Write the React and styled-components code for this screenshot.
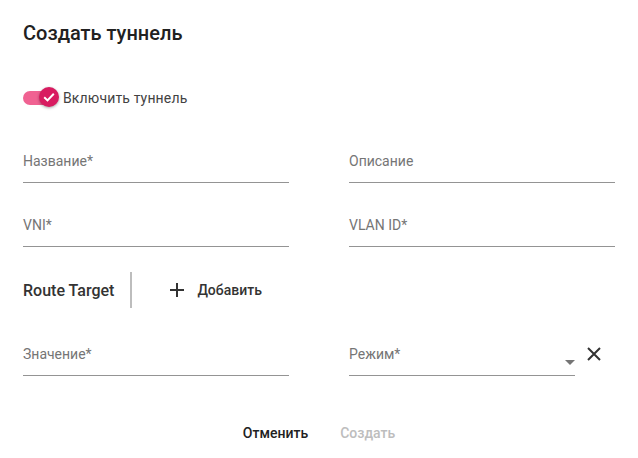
import styled, { createGlobalStyle } from "styled-components";

const GlobalStyle = createGlobalStyle`
  html, body {
    margin: 0;
    padding: 0;
    background: #fff;
    font-family: Roboto, "Noto Sans", sans-serif;
  }
`;

const Dialog = styled.div`
  width: 638px;
  height: 458px;
  box-sizing: border-box;
  padding: 17px 24px 0 23px;
  display: flex;
  flex-direction: column;
`;

const Title = styled.h2`
  margin: 0;
  font-size: 20px;
  line-height: 32px;
  font-weight: 500;
  color: #212121;
`;

const SwitchRow = styled.label`
  display: flex;
  align-items: center;
  height: 24px;
  margin-top: 37px;
  gap: 4px;
  font-size: 14px;
  letter-spacing: 0.15px;
  color: #424242;
`;

const SwitchBox = styled.span`
  position: relative;
  width: 36px;
  height: 24px;
  display: flex;
  align-items: center;
`;

const Track = styled.span`
  width: 34px;
  height: 14px;
  border-radius: 7px;
  background: #f06292;
`;

const Thumb = styled.span`
  position: absolute;
  left: 16px;
  top: 1px;
  width: 20px;
  height: 20px;
  border-radius: 50%;
  background: #d81b60;
  box-shadow: 0 1px 3px rgba(0, 0, 0, 0.35);
  display: flex;
  align-items: center;
  justify-content: center;
`;

const Grid = styled.div`
  display: grid;
  grid-template-columns: 266px 266px;
  column-gap: 60px;
  row-gap: 16px;
  margin-top: ${(p) => p.$top}px;
`;

const Field = styled.div`
  height: 48px;
  box-sizing: border-box;
  border-bottom: 1px solid #949494;
  padding-top: 16px;
  display: flex;
  justify-content: space-between;
  font-size: 14px;
  line-height: 20px;
  color: #757575;
  width: ${(p) => (p.$w ? `${p.$w}px` : "auto")};
`;

const Arrow = styled.span`
  align-self: flex-end;
  margin: 0 0 10px 0;
  width: 0;
  height: 0;
  border-left: 5px solid transparent;
  border-right: 5px solid transparent;
  border-top: 5px solid #757575;
`;

const SelectCell = styled.div`
  display: flex;
  align-items: flex-start;
  gap: 11px;
`;

const IconButton = styled.button`
  border: 0;
  background: none;
  padding: 0;
  margin-top: 18px;
  width: 16px;
  height: 16px;
  display: flex;
  align-items: center;
  justify-content: center;
  cursor: pointer;
`;

const RouteRow = styled.div`
  display: flex;
  align-items: center;
  height: 36px;
  margin-top: 25px;
`;

const RouteTitle = styled.span`
  font-size: 16px;
  font-weight: 500;
  color: #333;
`;

const Divider = styled.span`
  width: 2px;
  height: 36px;
  background: #bdbdbd;
  margin-left: 16px;
`;

const AddButton = styled.button`
  border: 0;
  background: none;
  display: flex;
  align-items: center;
  gap: 13px;
  margin-left: 30px;
  padding: 0 8px;
  height: 36px;
  font-family: inherit;
  font-size: 14px;
  font-weight: 500;
  color: #333;
  cursor: pointer;
`;

const Actions = styled.div`
  display: flex;
  justify-content: center;
  gap: 16px;
  margin-top: 39px;
  padding-left: 1px;
`;

const TextButton = styled.button`
  border: 0;
  background: none;
  height: 36px;
  padding: 0 8px;
  font-family: inherit;
  font-size: 14px;
  font-weight: 500;
  color: ${(p) => (p.disabled ? "#bdbdbd" : "#212121")};
  cursor: ${(p) => (p.disabled ? "default" : "pointer")};
`;

export default function App() {
  return (
    <>
      <GlobalStyle />
      <Dialog>
        <Title>Создать туннель</Title>
        <SwitchRow>
          <SwitchBox>
            <Track />
            <Thumb>
              <svg width="14" height="14" viewBox="0 0 14 14">
                <path d="M2.2 7.3 L5.5 10.4 L11.8 3.8" fill="none" stroke="#fff" strokeWidth="2" />
              </svg>
            </Thumb>
          </SwitchBox>
          Включить туннель
        </SwitchRow>
        <Grid $top={25}>
          <Field>Название*</Field>
          <Field>Описание</Field>
          <Field>VNI*</Field>
          <Field>VLAN ID*</Field>
        </Grid>
        <RouteRow>
          <RouteTitle>Route Target</RouteTitle>
          <Divider />
          <AddButton>
            <svg width="14" height="14" viewBox="0 0 14 14">
              <path d="M7 0 V14 M0 7 H14" stroke="#333" strokeWidth="2" />
            </svg>
            Добавить
          </AddButton>
        </RouteRow>
        <Grid $top={20}>
          <Field>Значение*</Field>
          <SelectCell>
            <Field $w={226}>
              Режим*
              <Arrow />
            </Field>
            <IconButton>
              <svg width="14" height="14" viewBox="0 0 14 14">
                <path d="M1 1 L13 13 M13 1 L1 13" stroke="#333" strokeWidth="2" />
              </svg>
            </IconButton>
          </SelectCell>
        </Grid>
        <Actions>
          <TextButton>Отменить</TextButton>
          <TextButton disabled>Создать</TextButton>
        </Actions>
      </Dialog>
    </>
  );
}
